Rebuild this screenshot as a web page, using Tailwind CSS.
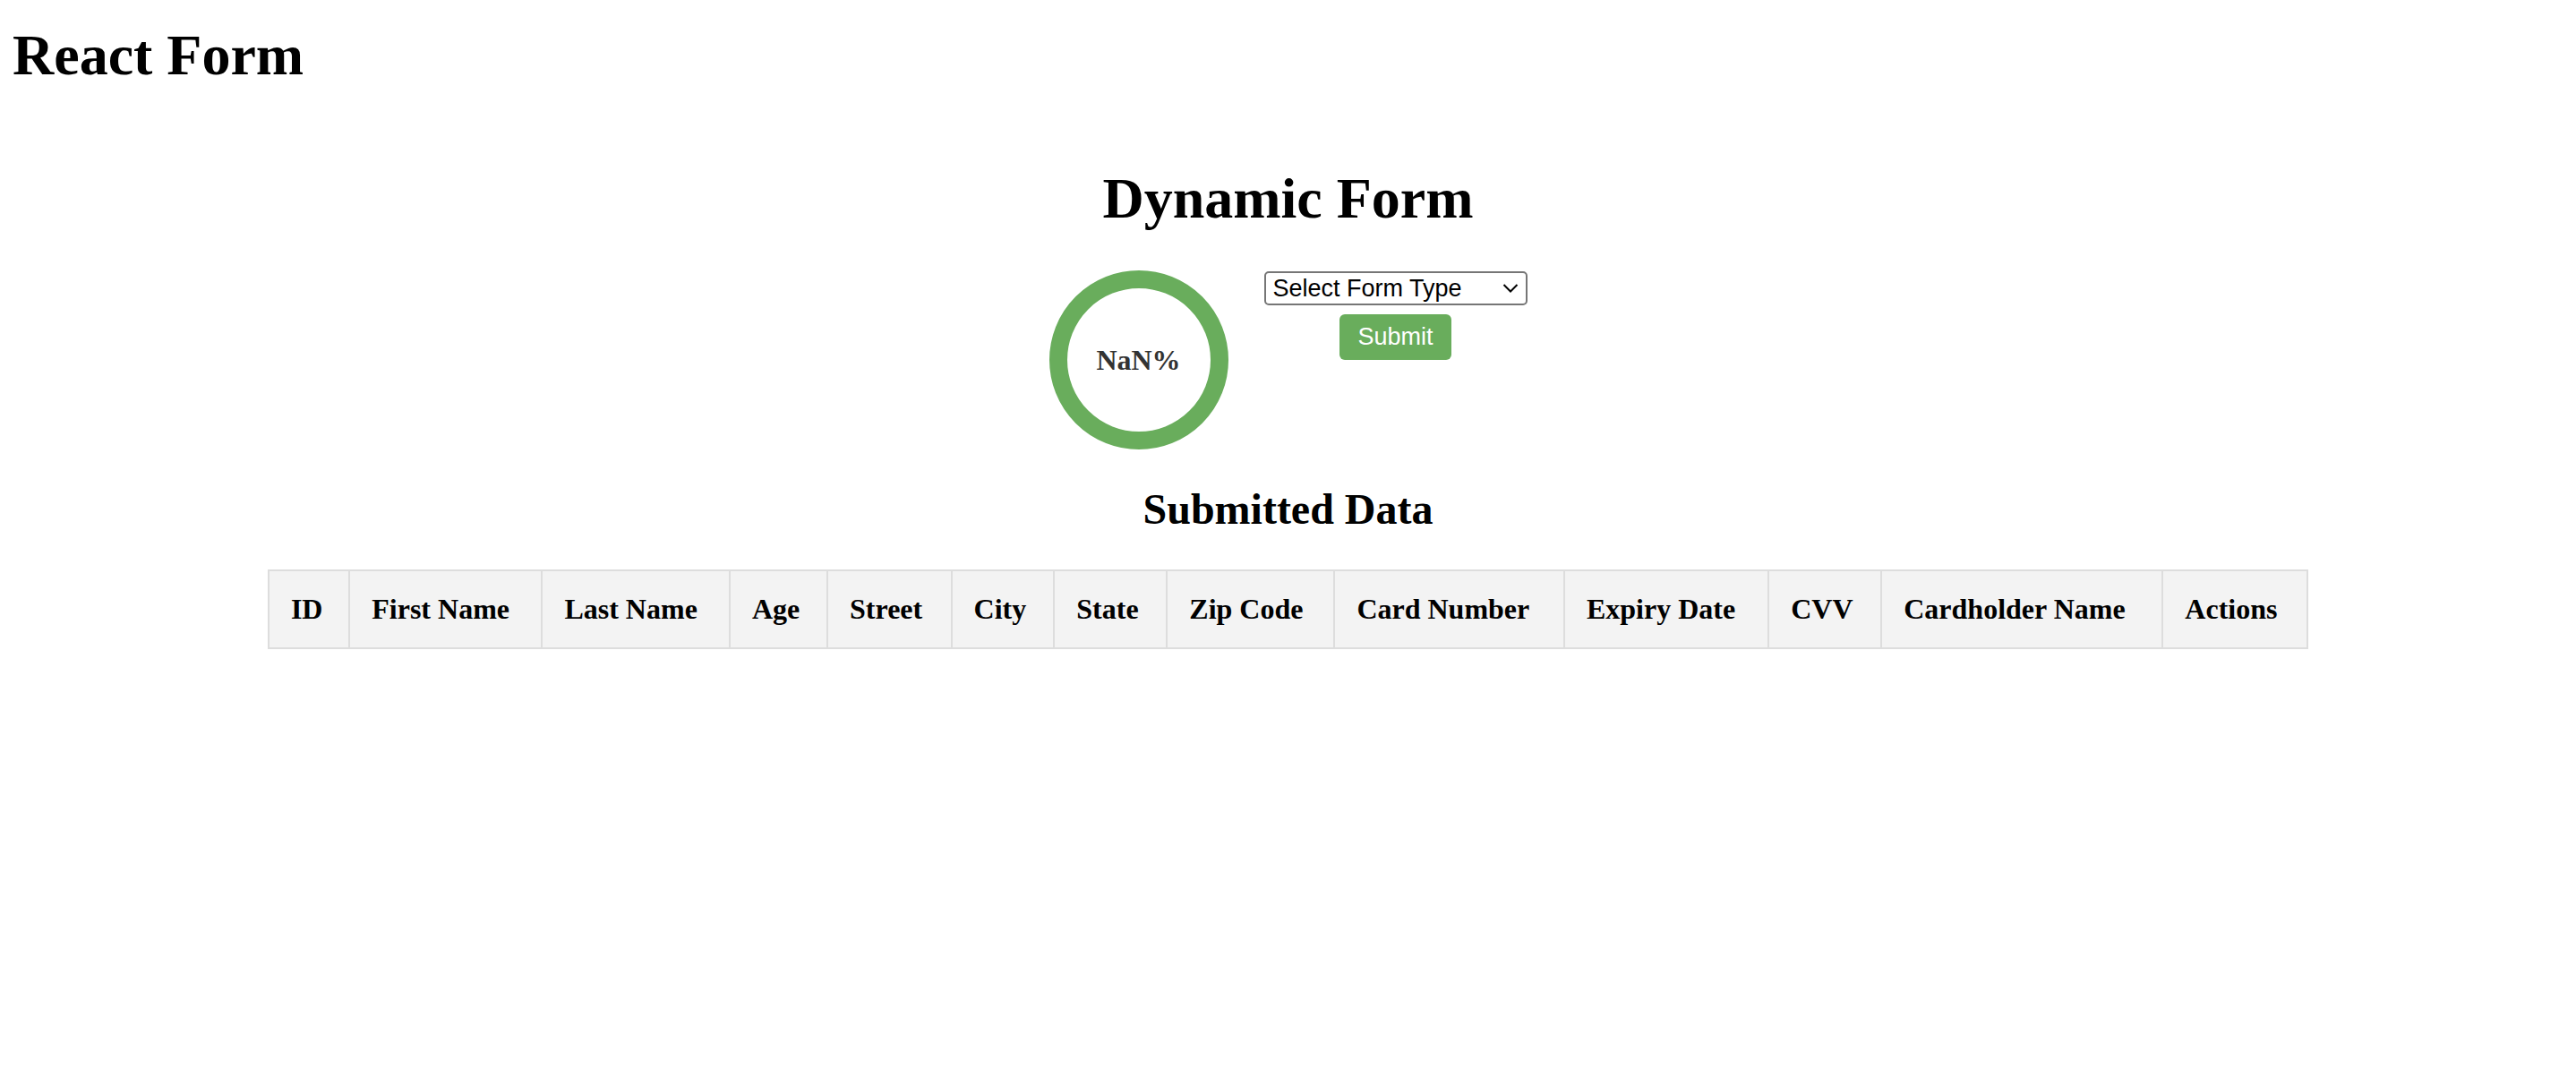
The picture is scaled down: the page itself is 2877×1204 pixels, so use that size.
<!DOCTYPE html>
<html lang="en">
<head>
<meta charset="utf-8">
<meta name="viewport" content="width=device-width, initial-scale=1">
<title>React Form</title>
<script src="https://cdn.jsdelivr.net/npm/@tailwindcss/browser@4"></script>
</head>
<body class="bg-white px-[14px] pt-[26px] font-['Liberation_Serif',serif] text-[32px] leading-[37px] text-black">
  <h1 class="text-[64px] leading-[72px] font-bold">React Form</h1>

  <main class="mt-22 flex flex-col items-center">
    <h1 class="text-[64px] leading-[72px] font-bold">Dynamic Form</h1>

    <div class="mt-11 flex items-start gap-10">
      <div class="flex size-[200px] items-center justify-center rounded-full border-20 border-[#69ad5c] font-bold text-[#333]">NaN%</div>

      <form class="flex flex-col items-center gap-[10px] pt-px font-['Liberation_Sans',sans-serif] text-[27px] leading-[31px]">
        <div class="relative">
          <select aria-label="Form type" class="block h-[38px] w-[294px] appearance-none rounded-[5px] border-2 border-[#767676] bg-white pl-2 text-black">
            <option>Select Form Type</option>
            <option>User Information</option>
            <option>Address Information</option>
            <option>Payment Information</option>
          </select>
          <svg class="pointer-events-none absolute top-[13px] right-[9px] h-3 w-5" viewBox="0 0 20 12" fill="none" stroke="black" stroke-width="2" aria-hidden="true"><path d="M2.5 2l7.5 7.5L17.500 2"/></svg>
        </div>
        <button type="submit" class="rounded-md bg-[#69ad5c] px-5 py-[10px] text-white">Submit</button>
      </form>
    </div>

    <h2 class="mt-10 text-[48px] leading-[54px] font-bold">Submitted Data</h2>

    <table class="mt-10 w-4/5 border-collapse text-left">
      <thead>
        <tr class="bg-[#f3f3f3] *:border-2 *:border-[#ddd] *:p-6 *:whitespace-nowrap">
          <th scope="col">ID</th>
          <th scope="col">First Name</th>
          <th scope="col">Last Name</th>
          <th scope="col">Age</th>
          <th scope="col">Street</th>
          <th scope="col">City</th>
          <th scope="col">State</th>
          <th scope="col">Zip Code</th>
          <th scope="col">Card Number</th>
          <th scope="col">Expiry Date</th>
          <th scope="col">CVV</th>
          <th scope="col">Cardholder Name</th>
          <th scope="col">Actions</th>
        </tr>
      </thead>
      <tbody></tbody>
    </table>
  </main>
</body>
</html>
